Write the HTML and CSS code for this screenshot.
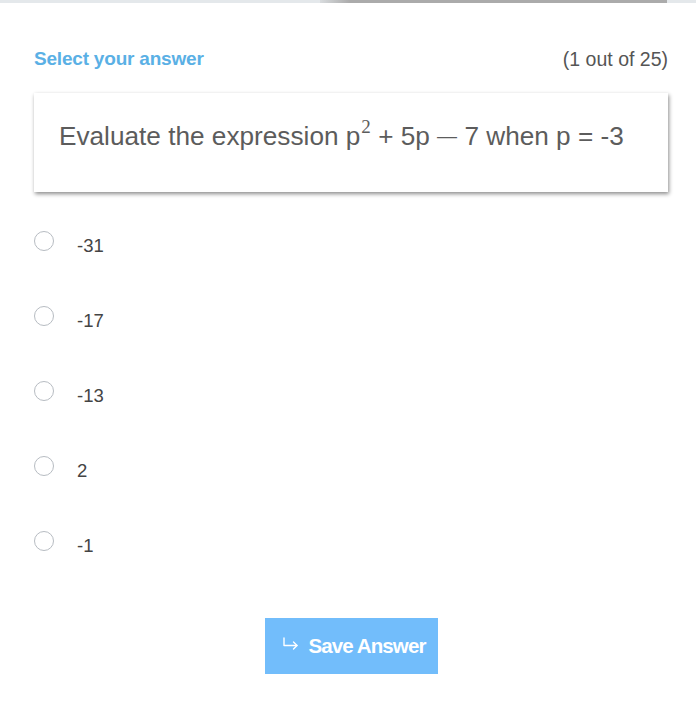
FILE: index.html
```html
<!DOCTYPE html>
<html>
<head>
<meta charset="utf-8">
<link rel="stylesheet" href="styles.css">
</head>
<body>
<div class="topbar"><div class="topbar-fill"></div></div>
<main class="quiz">
  <header class="quiz-head">
    <span class="quiz-label">Select your answer</span>
    <span class="quiz-count">(1 out of 25)</span>
  </header>
  <section class="question-card">
    <p class="question">Evaluate the expression p<sup>2</sup> + 5p <span class="dash">—</span> 7 when p = -3</p>
  </section>
  <ul class="options">
    <li class="option"><span class="radio"></span><span class="opt-text">-31</span></li>
    <li class="option"><span class="radio"></span><span class="opt-text">-17</span></li>
    <li class="option"><span class="radio"></span><span class="opt-text">-13</span></li>
    <li class="option"><span class="radio"></span><span class="opt-text">2</span></li>
    <li class="option"><span class="radio"></span><span class="opt-text">-1</span></li>
  </ul>
  <div class="actions">
    <button class="save-btn">
      <svg class="save-icon" width="18" height="14" viewBox="0 0 18 14" fill="none" stroke="#fff" stroke-width="1.4" stroke-linecap="round" stroke-linejoin="round"><path d="M2 1v7.5h13"/><path d="M11.5 5l3.5 3.5-3.5 3.5"/></svg>
      <span>Save Answer</span>
    </button>
  </div>
</main>
</body>
</html>
```
FILE: styles.css
```css
* { box-sizing: border-box; }
html, body { margin: 0; padding: 0; background: #fff; }
body { font-family: "Liberation Sans", Arial, sans-serif; width: 696px; height: 701px; overflow: hidden; }

.topbar { height: 3px; background: #e4e8eb; display: flex; padding-left: 320px; padding-right: 29px; }
.topbar-fill { flex: 1; background: linear-gradient(to right, rgba(170,170,170,0.2), #ababab 30px, #ababab); }

.quiz { padding: 0 28px 0 34px; }

.quiz-head { display: flex; justify-content: space-between; align-items: center; margin-top: 45px; height: 22px; }
.quiz-label { color: #5ab0e5; font-size: 19px; font-weight: bold; letter-spacing: -0.2px; }
.quiz-count { color: #555; font-size: 19.5px; }

.question-card { margin-top: 23px; height: 99px; background: #fff; box-shadow: 1px 2px 4px rgba(0,0,0,0.45); padding: 27px 26px 0 25px; }
.question { margin: 0; font-size: 26.2px; color: #5c5c5c; line-height: 32px; white-space: nowrap; }
.question sup { font-family: "Liberation Serif", "Times New Roman", serif; font-size: 19px; line-height: 0; vertical-align: 0; position: relative; top: -12px; margin-left: 1px; }
.dash { font-size: 20px; position: relative; top: -2px; }

.options { list-style: none; margin: 39px 0 0 0; padding: 0; display: flex; flex-direction: column; gap: 55px; }
.option { display: flex; align-items: center; height: 20px; }
.radio { width: 20px; height: 20px; border: 1px solid #b7bcc2; border-radius: 50%; }
.opt-text { margin-left: 23px; font-size: 18.5px; color: #444; position: relative; top: 5px; }

.actions { display: flex; justify-content: center; margin-top: 67px; }
.save-btn { width: 173px; height: 56px; margin-left: 1px; background: #72bdfb; border: none; color: #fff; font-family: "Liberation Sans", Arial, sans-serif; font-weight: bold; font-size: 20.5px; letter-spacing: -0.9px; display: flex; align-items: center; justify-content: center; gap: 9px; padding: 0 0 0 4px; }
.save-icon { position: relative; top: -2px; }
```
